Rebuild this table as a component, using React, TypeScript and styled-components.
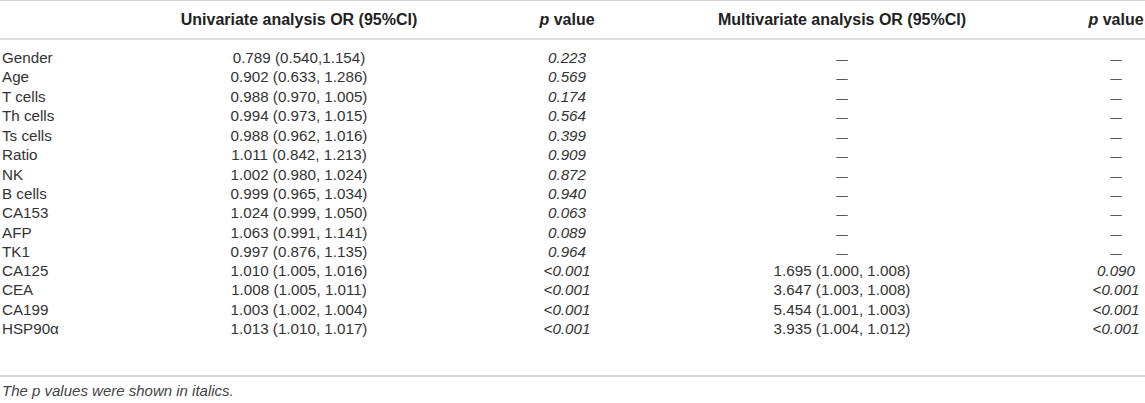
import React from "react";
import styled, { createGlobalStyle } from "styled-components";

const Global = createGlobalStyle`
  html, body { margin: 0; padding: 0; background: #fff; }
  body { font-family: "Liberation Sans", Arial, Helvetica, sans-serif; color: #333; }
`;

const COLS = "61px 476px 60px 490px 58px";

const Wrapper = styled.div`
  width: 1145px;
`;

const Table = styled.div`
  border-top: 1px solid #d4d4d4;
  border-bottom: 2px solid #d9d9d9;
  padding-bottom: 37px;
`;

const HeaderRow = styled.div`
  display: grid;
  grid-template-columns: ${COLS};
  height: 39px;
  align-items: center;
  border-bottom: 2px solid #dcdcdc;
  font-weight: bold;
  font-size: 16px;
  color: #222;
  padding-top: 1px;
  box-sizing: border-box;
`;

const Body = styled.div`
  padding-top: 7px;
`;

const Row = styled.div`
  display: grid;
  grid-template-columns: ${COLS};
  height: 19.43px;
  align-items: center;
  font-size: 15.2px;
  line-height: 19px;
`;

const Cell = styled.div<{ $left?: boolean; $italic?: boolean }>`
  text-align: ${(p) => (p.$left ? "left" : "center")};
  padding-left: ${(p) => (p.$left ? "2px" : "0")};
  font-style: ${(p) => (p.$italic ? "italic" : "normal")};
  white-space: nowrap;
`;

const Dash = styled.span`
  font-size: 11.5px;
  position: relative;
  top: 1px;
`;

const Note = styled.div`
  font-style: italic;
  font-size: 15px;
  color: #444;
  padding: 5px 0 0 2px;
`;

const rows: [string, string, string, string | null, string | null][] = [
  ["Gender", "0.789 (0.540,1.154)", "0.223", null, null],
  ["Age", "0.902 (0.633, 1.286)", "0.569", null, null],
  ["T cells", "0.988 (0.970, 1.005)", "0.174", null, null],
  ["Th cells", "0.994 (0.973, 1.015)", "0.564", null, null],
  ["Ts cells", "0.988 (0.962, 1.016)", "0.399", null, null],
  ["Ratio", "1.011 (0.842, 1.213)", "0.909", null, null],
  ["NK", "1.002 (0.980, 1.024)", "0.872", null, null],
  ["B cells", "0.999 (0.965, 1.034)", "0.940", null, null],
  ["CA153", "1.024 (0.999, 1.050)", "0.063", null, null],
  ["AFP", "1.063 (0.991, 1.141)", "0.089", null, null],
  ["TK1", "0.997 (0.876, 1.135)", "0.964", null, null],
  ["CA125", "1.010 (1.005, 1.016)", "<0.001", "1.695 (1.000, 1.008)", "0.090"],
  ["CEA", "1.008 (1.005, 1.011)", "<0.001", "3.647 (1.003, 1.008)", "<0.001"],
  ["CA199", "1.003 (1.002, 1.004)", "<0.001", "5.454 (1.001, 1.003)", "<0.001"],
  ["HSP90α", "1.013 (1.010, 1.017)", "<0.001", "3.935 (1.004, 1.012)", "<0.001"],
];

export default function App() {
  return (
    <Wrapper>
      <Global />
      <Table>
        <HeaderRow>
          <Cell $left />
          <Cell>Univariate analysis OR (95%CI)</Cell>
          <Cell>
            <i>p</i> value
          </Cell>
          <Cell>Multivariate analysis OR (95%CI)</Cell>
          <Cell>
            <i>p</i> value
          </Cell>
        </HeaderRow>
        <Body>
          {rows.map((r) => (
            <Row key={r[0]}>
              <Cell $left>{r[0]}</Cell>
              <Cell>{r[1]}</Cell>
              <Cell $italic>{r[2]}</Cell>
              <Cell>{r[3] ?? <Dash>—</Dash>}</Cell>
              <Cell $italic={r[4] !== null}>{r[4] ?? <Dash>—</Dash>}</Cell>
            </Row>
          ))}
        </Body>
      </Table>
      <Note>The p values were shown in italics.</Note>
    </Wrapper>
  );
}
